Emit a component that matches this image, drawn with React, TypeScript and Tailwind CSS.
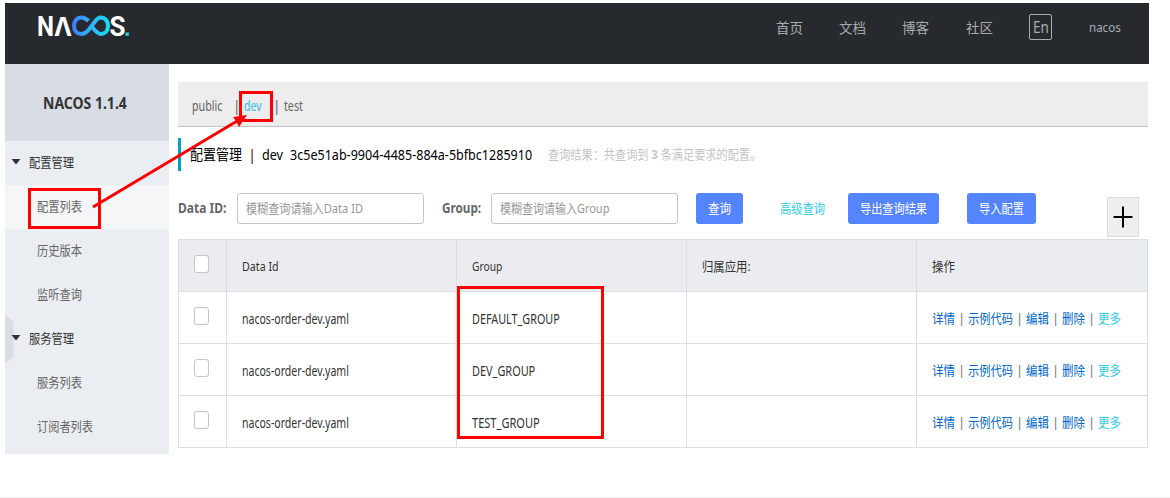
import React, { useLayoutEffect, useRef, useState } from 'react';

interface FitProps {
  w: number;
  className?: string;
  children: React.ReactNode;
}

// Condenses a single line of text to the given width
const Fit: React.FC<FitProps> = ({ w, className = '', children }) => {
  const ref = useRef<HTMLSpanElement>(null);
  const [scale, setScale] = useState(1);

  useLayoutEffect(() => {
    if (ref.current) setScale(w / ref.current.offsetWidth);
  }, [w]);

  return (
    <span className={`block shrink-0 ${className}`} style={{ width: w }}>
      <span ref={ref} className="block w-max origin-left whitespace-pre" style={{ transform: `scaleX(${scale})` }}>
        {children}
      </span>
    </span>
  );
};

const Logo = () => (
  <svg width="98" height="40" viewBox="0 0 98 40" className="mt-[2px] ml-[30px]">
    <defs>
      <linearGradient id="loop" gradientUnits="userSpaceOnUse" x1="37" y1="0" x2="75" y2="0">
        <stop offset="0" stopColor="#3f7cf8" />
        <stop offset="0.5" stopColor="#2fb4fa" />
        <stop offset="1" stopColor="#14dff0" />
      </linearGradient>
    </defs>
    <g fill="#fff" fontFamily="Roboto" fontWeight="700" fontSize="27">
      <text x="2" y="30.500" textLength="17" lengthAdjust="spacingAndGlyphs">N</text>
      <text x="19" y="30.500" textLength="18" lengthAdjust="spacingAndGlyphs" fontFamily="Inter" fontWeight="700" fontSize="26">Λ</text>
      <text x="74.500" y="30.500" textLength="16" lengthAdjust="spacingAndGlyphs">S</text>
    </g>
    <g fill="none" stroke="url(#loop)" strokeWidth="4">
      <path d="M53.500 16 C51 13.500 48.500 12.500 46 12.500 C42 12.500 39 16 39 20.800 C39 25.600 42 29 46 29 C48.500 29 51 28 53 25.500 L60 16.500 C62 13.500 64 12.500 66 12.500 C70 12.500 73 16 73 20.800 C73 25.600 70 29 66 29 C63.500 29 61.500 27.500 57.500 22.500" />
    </g>
    <rect x="90.500" y="27.500" width="3.300" height="3.300" fill="#14dff0" />
  </svg>
);

const navItems = ['首页', '文档', '博客', '社区'];

const Header = () => (
  <header className="flex h-[61px] w-[1144px] bg-[#262a2e] text-[#a9abad]">
    <Logo />
    <nav className="ml-auto flex h-[48px] items-center pr-[28px] text-[14px]">
      {navItems.map((item) => (
        <Fit key={item} w={27} className="mr-[36.300px]">{item}</Fit>
      ))}
      <div className="mr-[37px] flex h-[26px] w-[23px] items-center justify-center rounded-[2px] border border-[#a9abad] pb-px text-[16px]">
        <Fit w={16}>En</Fit>
      </div>
      <Fit w={32} className="pt-[2px] text-[13px]">nacos</Fit>
    </nav>
  </header>
);

interface MenuItem {
  label: string;
  width: number;
  group?: boolean;
  active?: boolean;
}

const menuItems: MenuItem[] = [
  { label: '配置管理', width: 45, group: true },
  { label: '配置列表', width: 45, active: true },
  { label: '历史版本', width: 45 },
  { label: '监听查询', width: 45 },
  { label: '服务管理', width: 45, group: true },
  { label: '服务列表', width: 45 },
  { label: '订阅者列表', width: 56 },
];

const Sidebar = () => (
  <aside className="relative h-[390px] w-[164px] shrink-0 bg-[#eaedf2] text-[13px]">
    <svg width="9" height="50" className="absolute left-0 top-[250px]">
      <path d="M0 0 L8.500 8 V42 L0 50 Z" fill="#d8dde5" />
    </svg>
    <div className="flex h-[77px] items-center bg-[#d8dde5] pl-[38px] text-[16px] font-bold text-[#333]">
      <Fit w={84}>NACOS 1.1.4</Fit>
    </div>
    {menuItems.map((item) => (
      <div
        key={item.label}
        className={`relative flex h-[44px] items-center ${item.active ? 'bg-[#f5f6f8]' : ''} ${
          item.group ? 'pl-[6px] text-[#333]' : 'pl-[32px] text-[#666]'
        }`}
      >
        {item.group && (
          <svg width="10" height="6" className="mr-[8px] mb-[2px]">
            <path d="M0.500 0 H9.500 L5 5.500 Z" fill="#333" />
          </svg>
        )}
        <Fit w={item.width}>{item.label}</Fit>
      </div>
    ))}
  </aside>
);

const Namespaces = () => (
  <div className="flex h-[45px] items-center border-b border-[#c4c4c4] bg-[#ededed] pl-[14px] pt-[5px] text-[13.5px] text-[#666]">
    <Fit w={30}>public</Fit>
    <Fit w={7} className="ml-[11px]">|</Fit>
    <Fit w={18} className="ml-[4px] text-[#33bde0]">dev</Fit>
    <Fit w={7} className="ml-[11px]">|</Fit>
    <Fit w={19} className="ml-[4px]">test</Fit>
  </div>
);

const Title = () => (
  <div className="mt-[11px] flex h-[33px] items-center border-l-[3px] border-[#009fcc] pl-[9px] text-[15px] text-black">
    <Fit w={52}>配置管理</Fit>
    <Fit w={8} className="ml-[6px] text-[#6b1414]">|</Fit>
    <Fit w={21} className="ml-[6px]">dev</Fit>
    <Fit w={242} className="ml-[7px]">3c5e51ab-9904-4485-884a-5bfbc1285910</Fit>
    <Fit w={213} className="ml-[15.500px] text-[13px] text-[#c4c4c4]">
      查询结果：共查询到 <b className="font-bold">3</b> 条满足要求的配置。
    </Fit>
  </div>
);

const inputStyle = 'flex h-[31px] items-center rounded-[3px] border border-[#c4c6cf] bg-white pl-[7.500px] text-[#999]';
const buttonStyle = 'flex h-[31px] items-center justify-center rounded-[3px] bg-[#5584ff] text-white';

const Toolbar = () => (
  <div className="mt-[22px] flex h-[46px] items-start text-[13px]">
    <div className="flex h-[31px] items-center">
      <Fit w={48} className="mr-[11px] text-[13.5px] font-bold text-[#666]">Data ID:</Fit>
      <div className={`${inputStyle} w-[187px]`}>
        <Fit w={117}>模糊查询请输入Data ID</Fit>
      </div>
      <Fit w={39} className="mr-[10px] ml-[18px] text-[13.5px] font-bold text-[#666]">Group:</Fit>
      <div className={`${inputStyle} w-[187px]`}>
        <Fit w={109}>模糊查询请输入Group</Fit>
      </div>
      <button className={`${buttonStyle} ml-[18px] w-[47px]`}>
        <Fit w={23}>查询</Fit>
      </button>
      <Fit w={45} className="ml-[37px] text-[#33cde5]">高级查询</Fit>
      <button className={`${buttonStyle} ml-[23px] w-[91px]`}>
        <Fit w={67}>导出查询结果</Fit>
      </button>
      <button className={`${buttonStyle} ml-[28px] w-[69px]`}>
        <Fit w={45}>导入配置</Fit>
      </button>
    </div>
    <button className="mt-[4px] ml-[71px] flex h-[40px] w-[32px] items-center justify-center border border-[#ddd] bg-[#eee]">
      <svg width="20" height="22" stroke="#000" strokeWidth="2">
        <path d="M0.500 11 H19.500 M10 0.500 V21.500" />
      </svg>
    </button>
  </div>
);

const columns = [
  { label: 'Data Id', width: 37 },
  { label: 'Group', width: 30 },
  { label: '归属应用:', width: 48 },
  { label: '操作', width: 23 },
];

const rows = [
  { dataId: 'nacos-order-dev.yaml', group: 'DEFAULT_GROUP', width: 88 },
  { dataId: 'nacos-order-dev.yaml', group: 'DEV_GROUP', width: 63 },
  { dataId: 'nacos-order-dev.yaml', group: 'TEST_GROUP', width: 68 },
];

const rowStyle =
  'grid h-[52px] grid-cols-[48px_230px_230px_230px_231px] divide-x divide-[#dcdee3] border-b border-[#dcdee3]';
const cellStyle = 'flex items-center pl-[15px] pt-[3px]';

const Checkbox = () => (
  <div className="flex items-start pt-[15px] pl-[15px]">
    <span className="h-[18px] w-[15px] rounded-[3px] border border-[#c4c6cf] bg-white" />
  </div>
);

const Divider = () => <Fit w={7} className="mx-[3px] text-[#777]">|</Fit>;

const ConfigTable = () => (
  <div className="w-[970px] border-x border-t border-[#dcdee3] text-[13px] text-[#333]">
    <div className={`${rowStyle} bg-[#ebecf0]`}>
      <Checkbox />
      {columns.map((col) => (
        <div key={col.label} className={cellStyle}>
          <Fit w={col.width}>{col.label}</Fit>
        </div>
      ))}
    </div>
    {rows.map((row) => (
      <div key={row.group} className={rowStyle}>
        <Checkbox />
        <div className={cellStyle}>
          <Fit w={107} className="text-[13.5px]">{row.dataId}</Fit>
        </div>
        <div className={cellStyle}>
          <Fit w={row.width} className="text-[13.5px]">{row.group}</Fit>
        </div>
        <div />
        <div className="flex items-center pt-[2px] pl-[15px] text-[#0066cc]">
          <Fit w={23}>详情</Fit>
          <Divider />
          <Fit w={45}>示例代码</Fit>
          <Divider />
          <Fit w={23}>编辑</Fit>
          <Divider />
          <Fit w={23}>删除</Fit>
          <Divider />
          <Fit w={23} className="text-[#33cde5]">更多</Fit>
        </div>
      </div>
    ))}
  </div>
);

const Annotations = () => (
  <div className="pointer-events-none absolute inset-0">
    <div className="absolute left-[28px] top-[188px] h-[41px] w-[73px] border-[3px] border-[#ff0000]" />
    <div className="absolute left-[239px] top-[91px] h-[31px] w-[34px] border-[3px] border-[#ff0000]" />
    <div className="absolute left-[457px] top-[286px] h-[153px] w-[147px] border-[3px] border-[#ff0000]" />
    <svg width="1170" height="498" className="absolute inset-0">
      <path d="M93 207 L238 120.500" stroke="#f00" strokeWidth="3" />
      <path d="M247 115 L233 117 L236 121 L239 127 Z" fill="#f00" />
    </svg>
  </div>
);

export default function App() {
  return (
    <div className="relative h-[498px] w-[1170px] overflow-hidden border-b border-[#eee] bg-white pl-[5px] pt-[3px] font-['Noto_Sans','Noto_Sans_CJK_SC',sans-serif]">
      <Header />
      <div className="flex">
        <Sidebar />
        <main className="ml-[9px] w-[970px] pt-[18px]">
          <Namespaces />
          <Title />
          <Toolbar />
          <ConfigTable />
        </main>
      </div>
      <Annotations />
    </div>
  );
}
